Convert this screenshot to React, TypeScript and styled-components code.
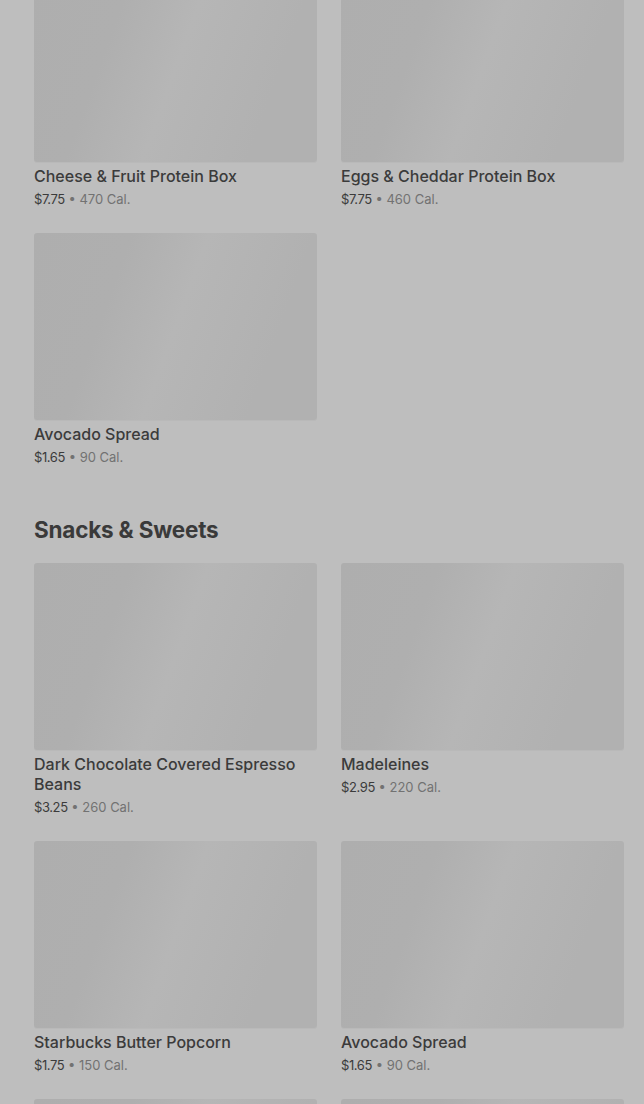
import React from "react";
import styled, { createGlobalStyle } from "styled-components";

const Global = createGlobalStyle`
  html, body { margin: 0; padding: 0; background: #bebebe; }
  body { font-family: Inter, "Noto Sans", "Liberation Sans", sans-serif; overflow: hidden; }
`;

const Page = styled.main`
  margin-top: -25px;
  padding: 0 20px 0 34px;
  display: flex;
  flex-direction: column;
`;

const Section = styled.section`
  display: flex;
  flex-direction: column;
  & + & { margin-top: 47px; }
`;

const Heading = styled.h2`
  margin: 0 0 17px;
  font-size: 22.5px;
  line-height: 32px;
  font-weight: 700;
  color: #3a3a3a;
  letter-spacing: -0.2px;
`;

const Grid = styled.div`
  display: grid;
  grid-template-columns: 283px 283px;
  column-gap: 24px;
  row-gap: 24px;
`;

const Card = styled.article`
  display: flex;
  flex-direction: column;
`;

const Thumb = styled.div`
  height: 187px;
  border-radius: 3px;
  background: linear-gradient(110deg, #aeaeae 0%, #afafaf 28%, #b6b6b6 50%, #b4b4b4 62%, #b1b1b1 80%, #b1b1b1 100%);
  box-shadow: 0 1px 0 #b9b9b9;
`;

const Title = styled.h3`
  margin: 4px 0 0;
  font-size: 16px;
  line-height: 20px;
  font-weight: 500;
  color: #3b3b3b;
`;

const Meta = styled.p`
  margin: 3px 0 0;
  font-size: 13px;
  line-height: 20px;
  color: #727272;
`;

const Price = styled.span`
  color: #3b3b3b;
  letter-spacing: -0.4px;
`;

type Item = { name: string; price: string; cal: string };

const top: Item[] = [
  { name: "Cheese & Fruit Protein Box", price: "$7.75", cal: "470 Cal." },
  { name: "Eggs & Cheddar Protein Box", price: "$7.75", cal: "460 Cal." },
  { name: "Avocado Spread", price: "$1.65", cal: "90 Cal." },
];

const snacks: Item[] = [
  { name: "Dark Chocolate Covered Espresso Beans", price: "$3.25", cal: "260 Cal." },
  { name: "Madeleines", price: "$2.95", cal: "220 Cal." },
  { name: "Starbucks Butter Popcorn", price: "$1.75", cal: "150 Cal." },
  { name: "Avocado Spread", price: "$1.65", cal: "90 Cal." },
  { name: "", price: "", cal: "" },
  { name: "", price: "", cal: "" },
];

const ItemCard = ({ item }: { item: Item }) => (
  <Card>
    <Thumb />
    {item.name && <Title>{item.name}</Title>}
    {item.price && (
      <Meta>
        <Price>{item.price}</Price> • {item.cal}
      </Meta>
    )}
  </Card>
);

export default function App() {
  return (
    <>
      <Global />
      <Page>
        <Section>
          <Grid>
            {top.map((it, i) => (
              <ItemCard key={i} item={it} />
            ))}
          </Grid>
        </Section>
        <Section>
          <Heading>Snacks &amp; Sweets</Heading>
          <Grid>
            {snacks.map((it, i) => (
              <ItemCard key={i} item={it} />
            ))}
          </Grid>
        </Section>
      </Page>
    </>
  );
}
